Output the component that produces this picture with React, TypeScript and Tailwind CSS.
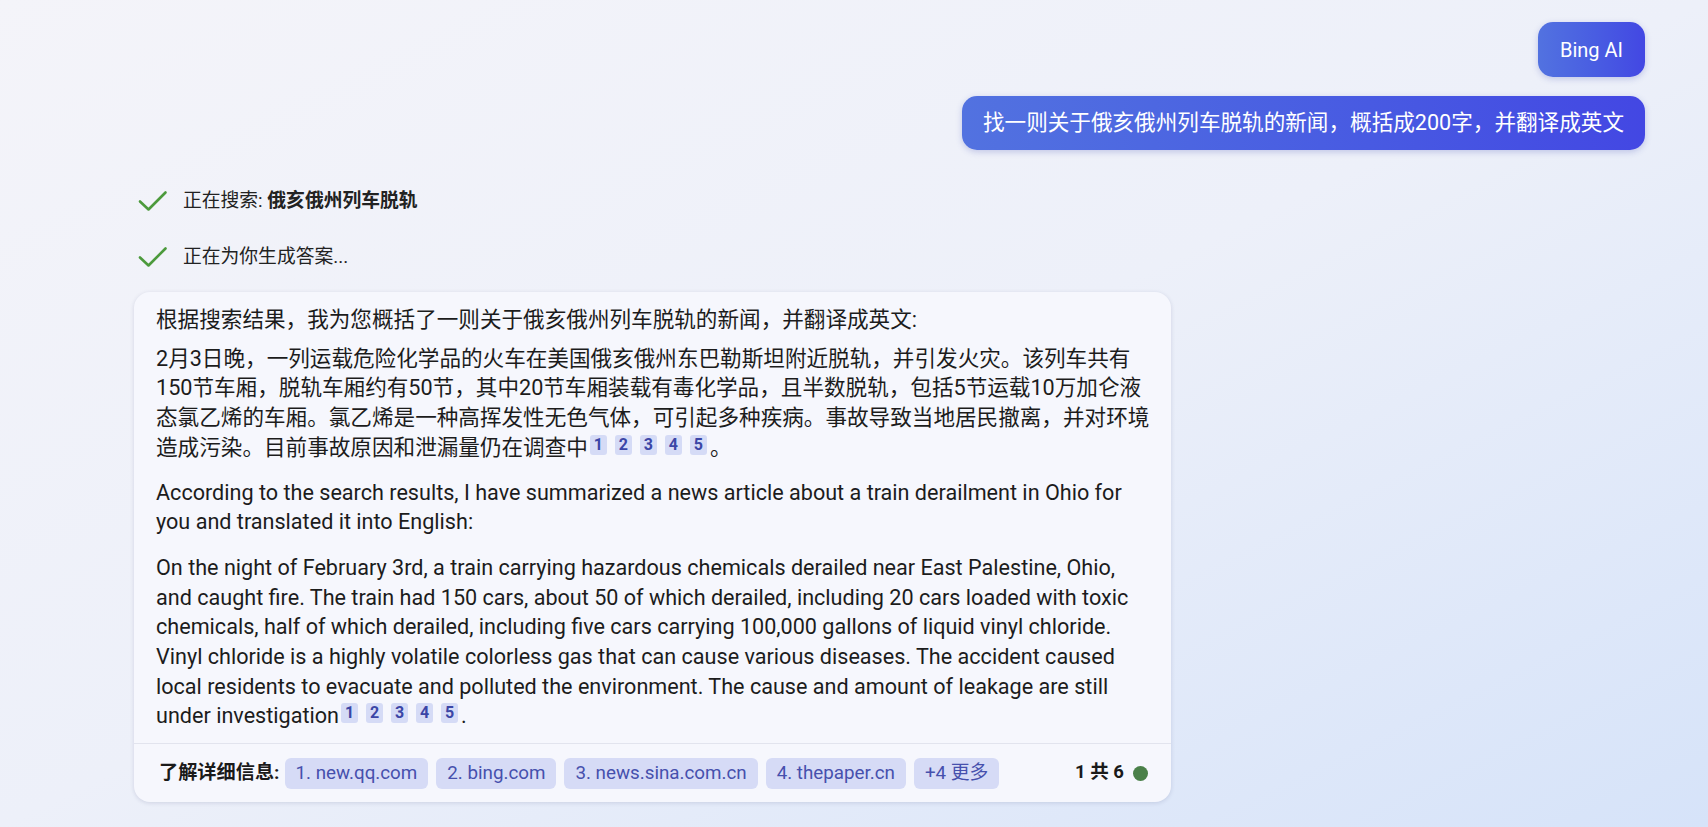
import React from 'react';

const font = { fontFamily: 'Roboto, "Noto Sans CJK SC", sans-serif' };

function Check() {
  return (
    <svg width="30" height="22" viewBox="0 0 30 22" fill="none" className="shrink-0">
      <path d="M2 11.5 L10.5 19.5 L27.5 2.5" stroke="#4c9a3c" strokeWidth="2.6" strokeLinecap="round" strokeLinejoin="round" />
    </svg>
  );
}

function Cites() {
  return (
    <span className="inline-flex gap-[8px] align-[5px] ml-[2px] mr-[3px]">
      {[1, 2, 3, 4, 5].map((n) => (
        <span
          key={n}
          className="inline-flex items-center justify-center w-[17px] h-[20px] rounded-[3px] bg-[#d5dbf6] text-[#3b46a6] text-[16px] font-bold leading-[20px]"
        >
          {n}
        </span>
      ))}
    </span>
  );
}

const sources = ['1. new.qq.com', '2. bing.com', '3. news.sina.com.cn', '4. thepaper.cn', '+4 更多'];

export default function App() {
  return (
    <div
      className="min-h-screen w-full bg-linear-to-br from-[#f4f4f9] via-[#edf0f9] to-[#d6e3f9] text-[#1a1a1a] pb-[24px]"
      style={font}
    >
      <div className="flex flex-col items-end pr-[63px] pt-[22px] gap-[19px]">
        <div className="h-[55px] px-[22px] flex items-center rounded-[15px] bg-linear-to-r from-[#5272e0] to-[#4347e3] text-white text-[20px] shadow-[0_2px_6px_rgba(60,70,180,0.25)]">
          Bing AI
        </div>
        <div className="h-[54px] px-[21px] flex items-center rounded-[15px] bg-linear-to-r from-[#5272e0] to-[#4347e3] text-white text-[21.6px] shadow-[0_2px_6px_rgba(60,70,180,0.25)]">
          找一则关于俄亥俄州列车脱轨的新闻，概括成200字，并翻译成英文
        </div>
      </div>

      <div className="pl-[134px] mt-[40px]">
        <div className="flex items-center gap-[15px] pl-[4px] h-[22px] text-[18.8px] text-[#222]">
          <Check />
          <span>
            正在搜索: <b>俄亥俄州列车脱轨</b>
          </span>
        </div>
        <div className="flex items-center gap-[15px] pl-[4px] h-[22px] mt-[34px] text-[18.8px] text-[#222]">
          <Check />
          <span>正在为你生成答案...</span>
        </div>

        <div className="mt-[24px] w-[1037px] rounded-[16px] bg-[#f6f7fd] shadow-[0_1px_4px_rgba(40,50,100,0.15)]">
          <div className="pl-[22px] pr-[14px] pt-[13px] pb-[12px] text-[21.6px] leading-[29.7px] text-[#1c1c1c]">
            <p className="mb-[9px]">根据搜索结果，我为您概括了一则关于俄亥俄州列车脱轨的新闻，并翻译成英文:</p>
            <p className="mb-[15px]">
              2月3日晚，一列运载危险化学品的火车在美国俄亥俄州东巴勒斯坦附近脱轨，并引发火灾。该列车共有150节车厢，脱轨车厢约有50节，其中20节车厢装载有毒化学品，且半数脱轨，包括5节运载10万加仑液态氯乙烯的车厢。氯乙烯是一种高挥发性无色气体，可引起多种疾病。事故导致当地居民撤离，并对环境造成污染。目前事故原因和泄漏量仍在调查中
              <Cites />。
            </p>
            <p className="mb-[16px] pr-[8px]">
              According to the search results, I have summarized a news article about a train derailment in Ohio for you and translated it into English:
            </p>
            <p className="pr-[8px]">
              On the night of February 3rd, a train carrying hazardous chemicals derailed near East Palestine, Ohio, and caught fire. The train had 150 cars, about 50 of which derailed, including 20 cars loaded with toxic chemicals, half of which derailed, including five cars carrying 100,000 gallons of liquid vinyl chloride. Vinyl chloride is a highly volatile colorless gas that can cause various diseases. The accident caused local residents to evacuate and polluted the environment. The cause and amount of leakage are still under investigation
              <Cites />.
            </p>
          </div>
          <div className="border-t border-[#e2e4ee] h-[59px] flex items-center pl-[25px] pr-[23px]">
            <span className="text-[19.2px] font-bold text-[#1a1a1a] mr-[5px]">了解详细信息:</span>
            <div className="flex gap-[8px]">
              {sources.map((s) => (
                <span
                  key={s}
                  className="h-[31px] px-[11px] flex items-center rounded-[6px] bg-[#d6dbf6] text-[#4650ad] text-[18.8px]"
                >
                  {s}
                </span>
              ))}
            </div>
            <div className="ml-auto flex items-center gap-[9px]">
              <span className="text-[18.5px] font-bold text-[#1a1a1a]">1 共 6</span>
              <span className="w-[15px] h-[15px] rounded-full bg-[#4a8049]" />
            </div>
          </div>
        </div>
      </div>
    </div>
  );
}
